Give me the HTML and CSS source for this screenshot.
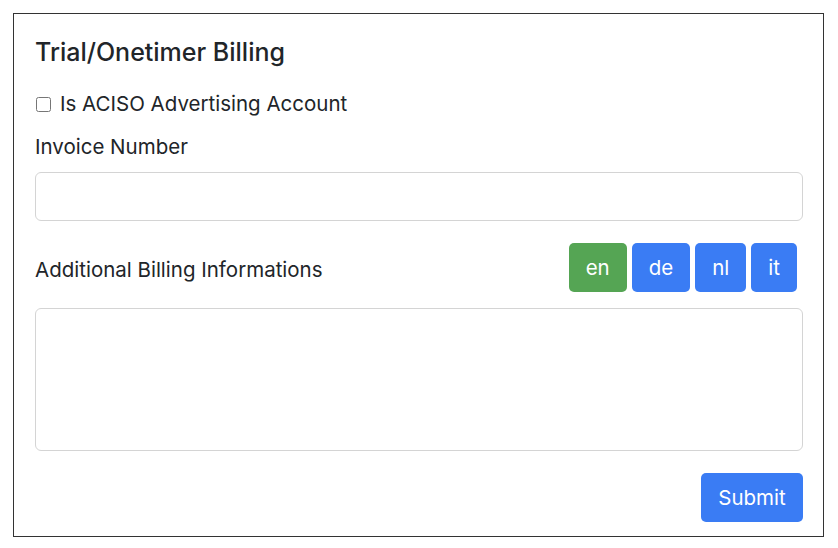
FILE: index.html
```html
<!DOCTYPE html>
<html lang="en">
<head>
    <meta charset="UTF-8">
    <meta name="viewport" content="width=device-width, initial-scale=1.0">
    <title>Trial/Onetimer Billing</title>
    <link rel="stylesheet" href="styles.css">
</head>
<body>

<form class="billing">
    <h2 class="title">Trial/Onetimer Billing</h2>

    <label class="check-row">
        <input type="checkbox" class="check">
        <span>Is ACISO Advertising Account</span>
    </label>

    <label class="field-label" for="invoice">Invoice Number</label>
    <input type="text" id="invoice" class="field">

    <div class="info-row">
        <span class="info-label">Additional Billing Informations</span>
        <div class="langs">
            <button type="button" class="lang active">en</button>
            <button type="button" class="lang">de</button>
            <button type="button" class="lang">nl</button>
            <button type="button" class="lang">it</button>
        </div>
    </div>
    <textarea class="field area"></textarea>

    <div class="actions">
        <button type="submit" class="submit">Submit</button>
    </div>
</form>

</body>
</html>
```

FILE: styles.css
```css
body {
    margin: 13px 14px 13px 13px;
    font-family: Inter, "Open Sans", sans-serif;
    color: #212529;
    background-color: #fff;
}
.billing {
    border: 1px solid #333;
    padding: 23px 20px 14px 21px;
    display: flex;
    flex-direction: column;
}
.title {
    margin: 0;
    font-size: 25px;
    font-weight: 500;
    line-height: 30px;
}
.check-row {
    display: flex;
    align-items: center;
    gap: 9px;
    margin-top: 25px;
    font-size: 20.5px;
    line-height: 24px;
}
.check {
    margin: 0 0 0 1px;
    width: 15px;
    height: 15px;
}
.field-label {
    margin-top: 19px;
    font-size: 20.5px;
    line-height: 24px;
}
.field {
    margin-top: 13px;
    height: 49px;
    box-sizing: border-box;
    border: 1px solid #d4d4d4;
    border-radius: 6px;
    font-family: inherit;
    font-size: 18px;
    padding: 6px 12px;
}
.info-row {
    margin-top: 22px;
    display: flex;
    align-items: center;
    justify-content: space-between;
}
.info-label {
    font-size: 20.5px;
    line-height: 24px;
    padding-top: 5px;
}
.langs {
    display: flex;
    gap: 5px;
    margin-right: 6px;
}
.lang,
.submit {
    height: 49px;
    border: none;
    border-radius: 5px;
    background-color: #3a7cf4;
    color: #fff;
    font-family: inherit;
    font-size: 20.5px;
    padding: 0 17px;
    cursor: pointer;
}
.lang.active {
    background-color: #55a554;
}
.area {
    margin-top: 16px;
    height: 143px;
    resize: none;
}
.actions {
    margin-top: 22px;
    display: flex;
    justify-content: flex-end;
}
.submit {
    width: 102px;
    padding: 0;
}
```
